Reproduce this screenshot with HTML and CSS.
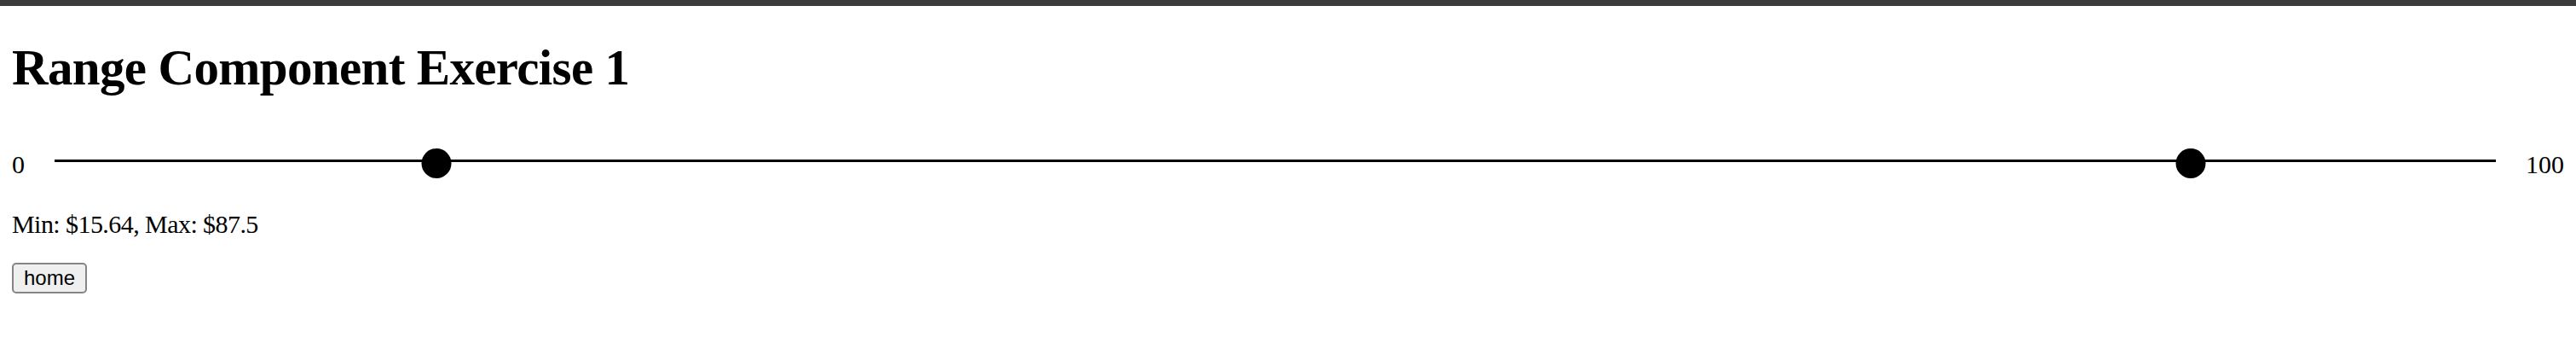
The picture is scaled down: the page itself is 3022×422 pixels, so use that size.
FILE: index.html
```html
<!DOCTYPE html>
<html lang="en">
<head>
<meta charset="utf-8">
<title>Range Component Exercise 1</title>
<link rel="stylesheet" href="styles.css">
</head>
<body>
<div class="topbar"></div>
<main class="page">
  <h1 class="title">Range Component Exercise 1</h1>
  <div class="range">
    <span class="range-label">0</span>
    <div class="range-track">
      <span class="range-thumb" style="left: 15.64%"></span>
      <span class="range-thumb" style="left: 87.5%"></span>
    </div>
    <span class="range-label">100</span>
  </div>
  <p class="summary">Min: $15.64, Max: $87.5</p>
  <button class="home-btn" type="button">home</button>
</main>
</body>
</html>
```

FILE: styles.css
```css
html, body {
  margin: 0;
  padding: 0;
  background: #ffffff;
}

body {
  font-family: "Liberation Serif", "Times New Roman", serif;
  color: #000000;
}

.topbar {
  height: 7px;
  background: #3c3c3c;
}

.page {
  padding: 0 14px;
}

.title {
  margin: 38px 0 0 0;
  font-size: 59px;
  line-height: 68px;
  font-weight: bold;
  letter-spacing: -0.65px;
}

.range {
  display: flex;
  align-items: flex-start;
  gap: 35px;
  margin-top: 61px;
}

.range-label {
  font-size: 30px;
  line-height: 37px;
}

.range-track {
  position: relative;
  flex: 1;
  height: 35px;
}

.range-track::before {
  content: "";
  position: absolute;
  left: 0;
  right: 0;
  top: 13px;
  height: 3px;
  background: #000000;
}

.range-thumb {
  position: absolute;
  top: 0;
  width: 35px;
  height: 35px;
  border-radius: 50%;
  background: #000000;
  transform: translateX(-50%);
}

.summary {
  margin: 34px 0 0 0;
  font-size: 30px;
  line-height: 35px;
  letter-spacing: -0.56px;
}

.home-btn {
  display: block;
  margin-top: 28px;
  height: 36px;
  padding: 0 12px;
  font-family: "Liberation Sans", Arial, sans-serif;
  font-size: 24px;
  color: #000000;
  background: #efefef;
  border: 2px solid #858585;
  border-radius: 5px;
}
```
